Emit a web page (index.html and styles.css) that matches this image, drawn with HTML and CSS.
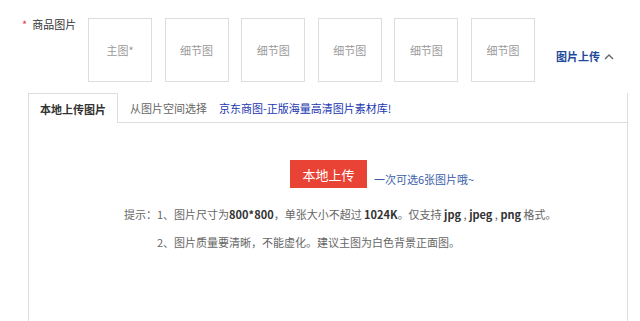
FILE: index.html
```html
<!DOCTYPE html>
<html lang="zh-CN">
<head>
<meta charset="utf-8">
<link rel="stylesheet" href="styles.css">
</head>
<body>
<div class="page">
  <div class="row-pics">
    <div class="label"><span class="req">*</span>商品图片</div>
    <div class="pics">
      <div class="pic">主图*</div>
      <div class="pic">细节图</div>
      <div class="pic">细节图</div>
      <div class="pic">细节图</div>
      <div class="pic">细节图</div>
      <div class="pic">细节图</div>
    </div>
    <div class="toggle">图片上传<svg class="chev" width="10" height="7" viewBox="0 0 10 7"><path d="M1 6 L5 2 L9 6" fill="none" stroke="#666" stroke-width="1.4"/></svg></div>
  </div>
  <div class="panel">
    <div class="tabs">
      <div class="tab active">本地上传图片</div>
      <div class="tab">从图片空间选择</div>
      <a class="tab link">京东商图-正版海量高清图片素材库!</a>
      <div class="tab-fill"></div>
    </div>
    <div class="body">
      <div class="upload-row">
        <div class="btn">本地上传</div>
        <span class="note">一次可选6张图片哦~</span>
      </div>
      <p class="hint">提示：1、图片尺寸为<b>800*800</b>，单张大小不超过 <b>1024K</b>。仅支持 <b>jpg</b> , <b>jpeg</b> , <b>png</b> 格式。</p>
      <p class="hint hint2">2、图片质量要清晰，不能虚化。建议主图为白色背景正面图。</p>
    </div>
  </div>
</div>
</body>
</html>
```
FILE: styles.css
```css
* { box-sizing: border-box; }
html, body { margin: 0; padding: 0; background: #fff; }
body {
  font-family: "Noto Sans CJK SC", "Noto Sans", sans-serif;
  font-size: 12px;
  color: #666;
}
.page { width: 640px; height: 321px; overflow: hidden; }
.row-pics {
  display: flex;
  align-items: flex-start;
  padding-top: 18px;
  height: 93px;
}
.label {
  width: 88px;
  padding-left: 22px;
  color: #333;
  font-size: 11px;
  line-height: 12px;
}
.req { color: #e4393c; margin-right: 5px; }
.pics { display: flex; gap: 12.6px; }
.pic {
  width: 64px;
  height: 64px;
  border: 1px solid #ddd;
  display: flex;
  align-items: center;
  justify-content: center;
  color: #999;
  font-size: 11px;
}
.toggle {
  margin-left: 21px;
  margin-top: 30px;
  color: #1f4a9c;
  font-size: 11px;
  font-weight: bold;
  display: flex;
  align-items: center;
  gap: 4px;
}
.chev { display: block; }
.panel {
  margin-left: 28px;
  width: 600px;
  height: 228px;
  border-right: 1px solid #ddd;
}
.tabs {
  display: flex;
  height: 30px;
  align-items: stretch;
}
.tab {
  display: flex;
  align-items: center;
  font-size: 11px;
  color: #666;
  border-bottom: 1px solid #ddd;
  padding: 0 12px;
}
.tab.active {
  width: 90px;
  justify-content: center;
  padding: 0;
  color: #333;
  font-weight: 600;
  border: 1px solid #ddd;
  border-bottom: none;
}
.tab.link { color: #1a37b0; padding-left: 0; }
.tab-fill { flex: 1; border-bottom: 1px solid #ddd; }
.body {
  border-left: 1px solid #ddd;
  height: 198px;
  padding-top: 37px;
}
.upload-row {
  display: flex;
  align-items: flex-end;
  padding-left: 261px;
}
.btn {
  width: 77px;
  height: 28px;
  background: #e94335;
  color: #fff;
  font-size: 13px;
  display: flex;
  align-items: center;
  justify-content: center;
}
.note {
  color: #3b5ea8;
  font-size: 11px;
  margin-left: 7px;
  line-height: 12px;
  margin-bottom: 3px;
}
.hint {
  margin: 19px 0 0 95px;
  font-size: 11px;
  line-height: 14px;
  color: #666;
}
.hint b { color: #333; font-size: 11px; font-weight: 600; }
.hint2 { margin-top: 14px; padding-left: 33px; }
```
